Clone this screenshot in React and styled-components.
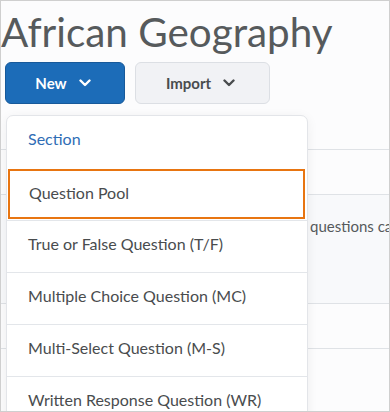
import React from 'react'
import styled, { createGlobalStyle } from 'styled-components'

const Global = createGlobalStyle`
  html, body { margin: 0; padding: 0; background: #fff; }
  * { box-sizing: border-box; }
`

const items = [
  { label: 'Section', link: true },
  { label: 'Question Pool', focused: true },
  { label: 'True or False Question (T/F)' },
  { label: 'Multiple Choice Question (MC)' },
  { label: 'Multi-Select Question (M-S)' },
  { label: 'Written Response Question (WR)' },
]

function Chevron({ color }) {
  return (
    <svg width="12" height="8" viewBox="0 0 12 8">
      <path d="M1.5 1.5 L6 6 L10.5 1.5" fill="none" stroke={color} strokeWidth="2.4" strokeLinecap="round" strokeLinejoin="round" />
    </svg>
  )
}

export default function App() {
  return (
    <Frame>
      <Global />
      <Title>African Geography</Title>
      <Toolbar>
        <Button primary>New <Chevron color="#fff" /></Button>
        <Button>Import <Chevron color="#494c4e" /></Button>
      </Toolbar>
      <Content>
        <Row height={21} />
        <Row height={109} shaded>
          <RowText>questions can be organised into sections</RowText>
        </Row>
        <Row height={21} />
      </Content>
      <Menu>
        {items.map((it) => (
          <MenuItem key={it.label} link={it.link} focused={it.focused}>
            {it.label}
          </MenuItem>
        ))}
      </Menu>
    </Frame>
  )
}

const Frame = styled.div`
  position: relative;
  width: 390px;
  height: 412px;
  overflow: hidden;
  border: 1px solid #cfcfcf;
  background: #fcfcfd;
  font-family: Lato, "Open Sans", sans-serif;
`

const Title = styled.h1`
  margin: 0;
  padding: 6px 0 0 0;
  height: 61px;
  font-size: 40.4px;
  font-weight: 400;
  line-height: 50px;
  color: #565a5c;
  white-space: nowrap;
`

const Toolbar = styled.div`
  display: flex;
  gap: 10px;
  padding-left: 4px;
`

const Button = styled.div`
  display: flex;
  align-items: center;
  justify-content: center;
  gap: 12px;
  height: 42px;
  width: ${(p) => (p.primary ? '120px' : '135px')};
  border-radius: 6px;
  font-size: 15px;
  font-weight: 700;
  color: ${(p) => (p.primary ? '#fff' : '#494c4e')};
  background: ${(p) => (p.primary ? '#1c6cb8' : '#f1f2f5')};
  border: 1px solid ${(p) => (p.primary ? '#17599a' : '#dcdfe4')};
  padding-right: 4px;
`

const Content = styled.div`
  margin-top: 45px;
  border-top: 1px solid #dfe2e6;
`

const Row = styled.div`
  height: ${(p) => p.height}px;
  background: ${(p) => (p.shaded ? '#f8f9fb' : 'transparent')};
  border-bottom: 1px solid #dfe2e6;
  padding: 44px 0 0 309px;
`

const RowText = styled.div`
  font-size: 15px;
  line-height: 18px;
  color: #565a5c;
  white-space: nowrap;
  margin-top: -22px;
`

const Menu = styled.div`
  position: absolute;
  left: 5px;
  top: 114px;
  width: 302px;
  background: #fff;
  border: 1px solid #e3e5e9;
  border-radius: 7px;
  box-shadow: 0 2px 12px rgba(0, 0, 0, 0.06);
  overflow: hidden;
`

const MenuItem = styled.div`
  height: 52px;
  display: flex;
  align-items: center;
  padding-left: ${(p) => (p.focused ? '19px' : '21px')};
  padding-bottom: 6px;
  font-size: 16px;
  color: ${(p) => (p.link ? '#2f6db5' : '#494c4e')};
  border-top: 1px solid #e3e6ea;
  &:first-child { border-top: none; height: 51px; }
  ${(p) =>
    p.focused &&
    `
    border: 2px solid #e87511;
    margin: 2px 2px 1px 1px;
    height: 50px;
    padding-bottom: 4px;
  `}
  white-space: nowrap;
`
